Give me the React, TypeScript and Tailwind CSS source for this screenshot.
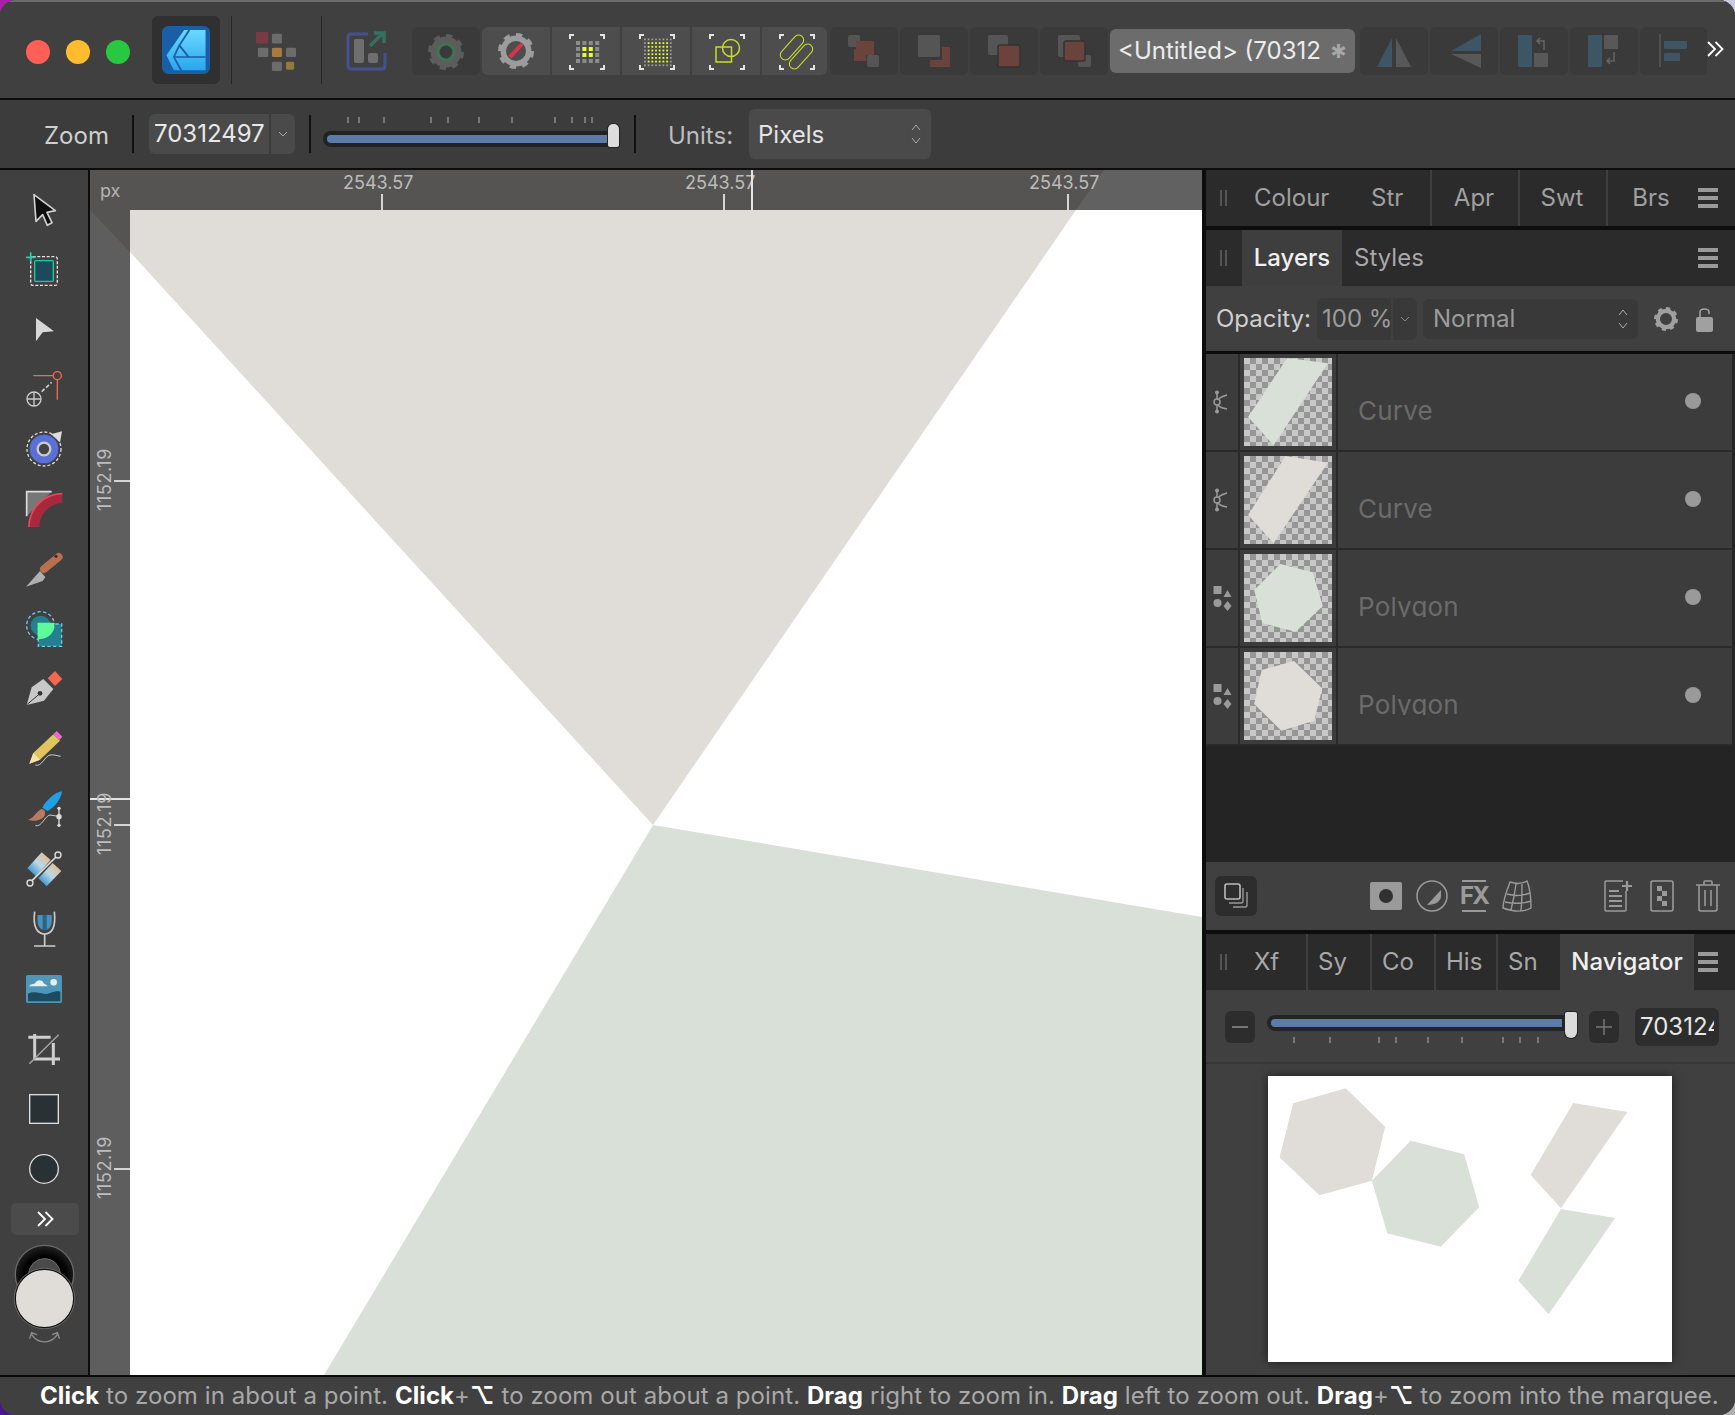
import type { ReactNode } from "react"

const BEIGE = "#e0ddd8"
const GREEN = "#d9e0d8"

function Gear({ cx, cy, r, color }: { cx: number; cy: number; r: number; color: string }) {
  return (
    <g fill="none" stroke={color}>
      <circle cx={cx} cy={cy} r={r * 0.68} strokeWidth={r * 0.36} />
      <circle cx={cx} cy={cy} r={r * 0.88} strokeWidth={r * 0.24} pathLength={16} strokeDasharray="1 1" />
    </g>
  )
}

function Brackets({ x1, x2 }: { x1: number; x2: number }) {
  const y1 = 8
  const y2 = 42
  return (
    <path
      d={`M${x1} ${y1 + 4}V${y1}H${x1 + 4}M${x2 - 4} ${y1}H${x2}V${y1 + 4}M${x1} ${y2 - 4}V${y2}H${x1 + 4}M${x2 - 4} ${y2}H${x2}V${y2 - 4}`}
      fill="none"
      stroke="#e4e4e4"
      strokeWidth="2"
    />
  )
}

function ToolBtn({ children, className }: { children: ReactNode; className: string }) {
  return (
    <div className={`h-[48px] shrink-0 ${className}`}>
      <svg viewBox="0 0 68 48" className="h-[48px] w-[68px]">
        {children}
      </svg>
    </div>
  )
}

function SnapDots() {
  const cells = [0, 1, 2, 3]
  return (
    <g>
      {cells.map((i) =>
        cells.map((j) => (
          <rect
            key={`${i}-${j}`}
            x={24 + i * 6.4}
            y={14 + j * 6}
            width="4"
            height="4"
            fill={i > 0 && i < 3 && j > 0 && j < 3 ? "#e6ff2e" : "#8c8c8c"}
          />
        )),
      )}
    </g>
  )
}

function SnapFine() {
  const cells = [0, 1, 2, 3, 4, 5, 6, 7]
  return (
    <g>
      {cells.map((i) =>
        cells.map((j) => (
          <rect
            key={`${i}-${j}`}
            x={22 + i * 3.7}
            y={11.5 + j * 3.7}
            width="1.8"
            height="1.8"
            fill={i > 0 && i < 7 && j > 0 && j < 7 ? "#e6ff2e" : "#9a9a9a"}
          />
        )),
      )}
    </g>
  )
}

function AppLogo() {
  return (
    <svg viewBox="438 72 130 144" preserveAspectRatio="none" className="h-[48px] w-[48px]">
      <defs>
        <linearGradient id="logoFill" x1="0" y1="0" x2="0" y2="1">
          <stop offset="0" stopColor="#6cd8ff" />
          <stop offset="1" stopColor="#29a6ee" />
        </linearGradient>
      </defs>
      <rect x="438" y="72" width="130" height="144" rx="18" fill="#1a5ea6" />
      <polygon points="498,84 556,84 556,205 470,205 450,160" fill="url(#logoFill)" />
      <path d="M512 84L485 130L510 165M470 165H556M470 165L490 205M470 165L485 130" fill="none" stroke="#1a5ea6" strokeWidth="5" />
    </svg>
  )
}

function PersonaGrid() {
  const gray = "#6c6c6c"
  return (
    <svg viewBox="692 85 108 118" preserveAspectRatio="none" className="h-[39px] w-[40px]">
      <rect x="692" y="85" width="33" height="35" rx="4" fill="#7a3a45" />
      <rect x="735" y="90" width="27" height="30" rx="4" fill={gray} />
      <rect x="697" y="133" width="28" height="28" rx="4" fill={gray} />
      <rect x="735" y="133" width="27" height="28" rx="4" fill="#a87a40" />
      <rect x="773" y="133" width="27" height="28" rx="4" fill={gray} />
      <rect x="735" y="175" width="27" height="28" rx="4" fill={gray} />
      <rect x="773" y="175" width="22" height="24" rx="4" fill="#8f7c3c" />
    </svg>
  )
}

function ExportIcon() {
  return (
    <svg viewBox="0 0 41 40" className="h-[40px] w-[41px]">
      <path d="M22 3H5Q2 3 2 6V35Q2 38 5 38H36Q39 38 39 35V22" fill="none" stroke="#45508f" strokeWidth="3" />
      <rect x="8" y="8" width="10" height="24" rx="2" fill="#6e6e6e" />
      <rect x="22" y="22" width="10" height="10" rx="2" fill="#6e6e6e" />
      <path d="M24 15L37 2M28 2H38V12" fill="none" stroke="#35705f" strokeWidth="3.5" />
    </svg>
  )
}

const tools: { box: string; art: ReactNode }[] = [
  {
    box: "75 60 114 114",
    art: <path d="M102 74L166 122L141 127L156 158L142 166L128 134L108 154Z" fill="#0e0e0e" stroke="#d0d0d0" strokeWidth="5" strokeLinejoin="round" />,
  },
  {
    box: "75 240 114 114",
    art: (
      <>
        <rect x="92" y="260" width="80" height="86" rx="6" fill="none" stroke="#e4e4e4" strokeWidth="4" strokeDasharray="9 5" />
        <rect x="104" y="272" width="56" height="62" rx="3" fill="#1c4a5a" stroke="#20c8a0" strokeWidth="4" />
        <path d="M78 262H107M92 247V276" stroke="#20d0a8" strokeWidth="5" />
      </>
    ),
  },
  { box: "75 423 114 114", art: <polygon points="108,447 162,487 128,490 108,517" fill="#d8d8d8" /> },
  {
    box: "75 603 114 114",
    art: (
      <>
        <path d="M100 620H160M172 632V692" stroke="#f5674f" strokeWidth="4" />
        <circle cx="172" cy="620" r="12" fill="none" stroke="#f5674f" strokeWidth="4" />
        <circle cx="102" cy="690" r="21" fill="none" stroke="#ccc" strokeWidth="4" />
        <path d="M81 690H123M102 669V711" stroke="#ccc" strokeWidth="4" />
        <path d="M125 668L155 640" stroke="#ccc" strokeWidth="5" strokeDasharray="12 6" />
      </>
    ),
  },
  {
    box: "75 783 114 114",
    art: (
      <>
        <circle cx="132" cy="840" r="51" fill="none" stroke="#ddd" strokeWidth="4" strokeDasharray="9 6" />
        <circle cx="132" cy="840" r="43" fill="#5a6fd8" />
        <circle cx="132" cy="840" r="19" fill="#444" stroke="#ccc" strokeWidth="7" />
        <polygon points="153,796 186,787 180,820" fill="#ddd" />
      </>
    ),
  },
  {
    box: "75 963 114 114",
    art: (
      <>
        <polygon points="80,968 155,968 80,1042" fill="#777" />
        <path d="M80 1042V968H155" fill="none" stroke="#ddd" strokeWidth="5" />
        <path d="M118 1074A70 72 0 0 1 187 1002V974A100 100 0 0 0 87 1074Z" fill="#a8283c" />
        <path d="M187 974A100 100 0 0 0 87 1074" fill="none" stroke="#f04458" strokeWidth="5" />
      </>
    ),
  },
  {
    box: "75 -27 114 114",
    art: (
      <>
        <path d="M132 30L176 -6" stroke="#b87050" strokeWidth="24" strokeLinecap="round" />
        <polygon points="78,83 120,36 136,54 128,66" fill="#b0b0b0" />
        <circle cx="168" cy="-8" r="5" fill="#4a2a20" />
      </>
    ),
  },
  {
    box: "75 153 114 114",
    art: (
      <>
        <circle cx="122" cy="200" r="42" fill="none" stroke="#6cc8f0" strokeWidth="4" strokeDasharray="10 7" />
        <circle cx="122" cy="200" r="30" fill="#24808f" />
        <rect x="115" y="195" width="70" height="67" fill="#24808f" stroke="#6cc8f0" strokeWidth="4" strokeDasharray="10 7" />
        <path d="M113 191H163V205C160 225 140 242 113 241Z" fill="#5cfc98" />
      </>
    ),
  },
  {
    box: "75 333 114 114",
    art: (
      <>
        <polygon points="80,438 95,385 130,360 160,390 132,425" fill="#c8c8c8" />
        <path d="M82 436L118 405" stroke="#333" strokeWidth="3" />
        <circle cx="120" cy="403" r="7" fill="#333" />
        <polygon points="143,358 165,336 187,360 165,381" fill="#f5674f" />
      </>
    ),
  },
  {
    box: "75 513 114 114",
    art: (
      <>
        <polygon points="88,614 100,582 160,526 180,545 120,602" fill="#e0c45c" />
        <polygon points="88,614 100,582 120,602" fill="#f2e4a8" />
        <polygon points="160,526 170,516 187,533 178,543" fill="#e86ad0" />
        <path d="M106 618C125 625 135 590 150 588C160 586 170 590 182 592" fill="none" stroke="#ccc" strokeWidth="3" />
      </>
    ),
  },
  {
    box: "75 693 114 114",
    art: (
      <>
        <path d="M127 746C140 722 165 700 186 697C184 718 165 745 143 756Z" fill="#20a0e8" />
        <path d="M84 782C100 780 108 758 124 750C134 750 138 760 134 770C125 785 100 788 84 782Z" fill="#b87a60" />
        <path d="M106 800C125 805 135 770 150 768C160 768 166 772 176 772" fill="none" stroke="#ccc" strokeWidth="3" />
        <path d="M177 747V800" stroke="#ddd" strokeWidth="4" />
        <circle cx="177" cy="748" r="5" fill="#ddd" />
        <circle cx="177" cy="773" r="8" fill="#ddd" />
        <circle cx="177" cy="799" r="5" fill="#ddd" />
      </>
    ),
  },
  {
    box: "75 873 114 114",
    art: (
      <>
        <defs>
          <linearGradient id="gradBand" x1="0" y1="1" x2="1" y2="0">
            <stop offset="0.15" stopColor="#3f98c8" />
            <stop offset="0.5" stopColor="#bcd8e8" />
            <stop offset="0.85" stopColor="#e2bd92" />
          </linearGradient>
        </defs>
        <polygon points="82,928 125,880 152,903 108,952" fill="url(#gradBand)" />
        <polygon points="115,958 158,912 184,936 140,982" fill="url(#gradBand)" />
        <path d="M96 965L168 894" stroke="#ddd" strokeWidth="5" />
        <circle cx="90" cy="972" r="9" fill="#444" stroke="#ddd" strokeWidth="4" />
        <circle cx="174" cy="888" r="9" fill="#444" stroke="#ddd" strokeWidth="4" />
      </>
    ),
  },
  {
    box: "75 1053 114 114",
    art: (
      <>
        <path d="M113 1068H155C158 1095 152 1112 134 1114C116 1112 110 1095 113 1068Z" fill="#4a90b8" />
        <path d="M134 1068V1114" stroke="#2c6488" strokeWidth="12" />
        <path d="M104 1058C98 1105 112 1125 134 1125C156 1125 168 1105 163 1058" fill="none" stroke="#ccc" strokeWidth="5" />
        <path d="M134 1125V1160M102 1161H166" stroke="#ccc" strokeWidth="5" />
      </>
    ),
  },
  {
    box: "75 3 114 114",
    art: (
      <>
        <rect x="78" y="18" width="108" height="84" rx="5" fill="#4f97b8" />
        <path d="M88 52C90 44 102 46 106 42C112 30 128 32 132 44C138 46 142 50 142 52Z" fill="#e8f0f4" />
        <circle cx="161" cy="40" r="10" fill="#e8f0f4" />
        <path d="M84 74C110 62 130 82 150 72C165 66 175 66 181 68V97H84Z" fill="#1c4a5e" />
      </>
    ),
  },
  {
    box: "75 183 114 114",
    art: (
      <>
        <path d="M85 205H152M104 195V270H180M160 222V288" fill="none" stroke="#cfcfcf" strokeWidth="9" />
        <path d="M88 284L176 197" stroke="#a8a8a8" strokeWidth="4" />
      </>
    ),
  },
  { box: "75 363 114 114", art: <rect x="89" y="377" width="86" height="86" fill="#2a3135" stroke="#ddd" strokeWidth="4" /> },
  { box: "75 543 114 114", art: <circle cx="132" cy="600" r="43" fill="#2a3135" stroke="#ddd" strokeWidth="4" /> },
]

function LeftTools() {
  return (
    <div className="flex w-[88px] shrink-0 flex-col items-center bg-[#404040] pt-[9px]">
      {tools.map((t, i) => (
        <div key={i} className="flex h-[60px] w-full items-center justify-center">
          <svg viewBox={t.box} className="h-[38px] w-[38px] overflow-visible">
            {t.art}
          </svg>
        </div>
      ))}
      <div className="ml-[2px] mt-[4px] flex h-[32px] w-[68px] items-center justify-center rounded-[5px] bg-[#4b4b4b]">
        <Chevrons />
      </div>
      <svg viewBox="35 820 200 310" className="mt-[8px] h-[103px] w-[67px]">
        <defs>
          <radialGradient id="strokeSwatch" cx="0.5" cy="0.55" r="0.6">
            <stop offset="0.6" stopColor="#000" />
            <stop offset="1" stopColor="#2c2c2c" />
          </radialGradient>
        </defs>
        <circle cx="135" cy="915" r="88" fill="url(#strokeSwatch)" stroke="#6a6a6a" strokeWidth="4" />
        <circle cx="135" cy="915" r="48" fill="#4a4a4a" stroke="#6a6a6a" strokeWidth="3" />
        <circle cx="135" cy="987" r="88" fill={BEIGE} stroke="#111" strokeWidth="4" />
        <circle cx="135" cy="987" r="91" fill="none" stroke="#666" strokeWidth="3" />
        <path d="M96 1095C115 1125 155 1125 174 1095M90 1108L96 1090L112 1096M180 1108L174 1090L158 1096" fill="none" stroke="#8c8c8c" strokeWidth="4" />
      </svg>
    </div>
  )
}

function Chevrons() {
  return (
    <svg viewBox="0 0 17 16" className="h-[16px] w-[17px]">
      <path d="M1 1L8 8L1 15M8.5 1L15.5 8L8.5 15" fill="none" stroke="#fff" strokeWidth="1.8" />
    </svg>
  )
}

function TopBar() {
  return (
    <div className="flex h-[98px] shrink-0 items-center border-t-2 border-[#6b6b6b] bg-[#404040] pl-[26px]">
      <div className="mt-[4px] flex gap-4">
        <div className="h-[24px] w-[24px] rounded-full bg-[#ff5f57]" />
        <div className="h-[24px] w-[24px] rounded-full bg-[#febc2e]" />
        <div className="h-[24px] w-[24px] rounded-full bg-[#28c840]" />
      </div>
      <div className="ml-[22px] flex h-[68px] w-[68px] items-center justify-center rounded-[6px] bg-[#303030]">
        <AppLogo />
      </div>
      <div className="ml-[11px] h-[68px] w-[1px] bg-[#262626]" />
      <div className="ml-[24px] mt-[2px]">
        <PersonaGrid />
      </div>
      <div className="ml-[25px] h-[68px] w-[1px] bg-[#262626]" />
      <div className="ml-[24px] mt-[2px]">
        <ExportIcon />
      </div>
      <div className="ml-[25px] mt-[2px] flex items-center gap-[2px]">
        <ToolBtn className="w-[68px] rounded-[6px] bg-[#3a3a3a]">
          <Gear cx={34} cy={25} r={18} color="#5c5c5c" />
          <circle cx="34" cy="25" r="8" fill="#3a3a3a" stroke="#3f7455" strokeWidth="3" />
        </ToolBtn>
        <ToolBtn className="w-[68px] rounded-l-[6px] bg-[#4d4d4d]">
          <Gear cx={34} cy={24} r={18} color="#9c9c9c" />
          <circle cx="34" cy="24" r="10" fill="#4d4d4d" />
          <path d="M28 30L40 17" stroke="#e0304a" strokeWidth="4" />
        </ToolBtn>
        <ToolBtn className="w-[68px] bg-[#4d4d4d]">
          <Brackets x1={18} x2={52} />
          <SnapDots />
        </ToolBtn>
        <ToolBtn className="w-[68px] bg-[#4d4d4d]">
          <Brackets x1={18} x2={52} />
          <SnapFine />
        </ToolBtn>
        <ToolBtn className="w-[68px] bg-[#4d4d4d]">
          <Brackets x1={18} x2={52} />
          <rect x="24" y="20" width="15.5" height="15" fill="none" stroke="#c8dc28" strokeWidth="1.5" />
          <circle cx="39" cy="21" r="8.5" fill="none" stroke="#c8dc28" strokeWidth="1.5" />
        </ToolBtn>
        <ToolBtn className="w-[65px] overflow-hidden rounded-r-[6px] bg-[#4d4d4d]">
          <Brackets x1={18} x2={52} />
          <g fill="none" stroke="#c8dc28" strokeWidth="1.1">
            <rect x="15" y="15.5" width="30" height="10" rx="5" transform="rotate(-48 30 20.5)" />
            <rect x="24" y="24.5" width="30" height="10" rx="5" transform="rotate(-48 39 29.5)" />
          </g>
        </ToolBtn>
        <div className="ml-[1px] flex gap-[2px]">
          <ToolBtn className="w-[68px] rounded-[6px] bg-[#3a3a3a]">
            <rect x="18" y="8" width="12" height="12" rx="2" fill="#555" />
            <path d="M26 14H44V28H36V34H24V22H26Z" fill="#6a433c" />
            <rect x="37" y="28" width="12" height="12" rx="2" fill="#555" />
          </ToolBtn>
          <ToolBtn className="w-[68px] rounded-[6px] bg-[#3a3a3a]">
            <rect x="18" y="8" width="22" height="22" rx="2" fill="#555" />
            <path d="M42 20H50V40H30V33H42Z" fill="#6a433c" />
          </ToolBtn>
          <ToolBtn className="w-[68px] rounded-[6px] bg-[#3a3a3a]">
            <rect x="18" y="8" width="20" height="20" rx="2" fill="#555" />
            <rect x="28" y="18" width="22" height="22" rx="2" fill="#6a433c" stroke="#333" strokeWidth="1.5" />
          </ToolBtn>
          <ToolBtn className="w-[68px] rounded-[6px] bg-[#3a3a3a]">
            <rect x="18" y="8" width="22" height="22" rx="2" fill="#555" />
            <rect x="38" y="28" width="13" height="12" rx="2" fill="#555" />
            <rect x="24" y="14" width="21" height="20" rx="2" fill="#6a433c" stroke="#333" strokeWidth="1.5" />
          </ToolBtn>
        </div>
      </div>
      <div className="ml-[2px] mt-[2px] flex h-[44px] w-[245px] shrink-0 items-center whitespace-nowrap rounded-[6px] bg-[#6c6c6c] pl-[8px] text-[24px] text-[#ececec]">
        &lt;Untitled&gt; (70312
        <span className="relative top-[6px] ml-[8px] text-[34px] font-bold leading-none text-[#a8a8a8]">*</span>
      </div>
      <div className="ml-[5px] mt-[2px] flex gap-[2px]">
        <ToolBtn className="w-[68px] rounded-[6px] bg-[#3a3a3a]">
          <path d="M17 40L32 11V40Z" fill="#3d5564" />
          <path d="M36 11L51 40H36Z" fill="#585858" />
        </ToolBtn>
        <ToolBtn className="w-[68px] rounded-[6px] bg-[#3a3a3a]">
          <path d="M51 7V24H21Z" fill="#3d5564" />
          <path d="M21 27H51V41Z" fill="#585858" />
        </ToolBtn>
        <ToolBtn className="w-[68px] rounded-[6px] bg-[#3a3a3a]">
          <rect x="18" y="8" width="14" height="32" rx="1" fill="#3d5564" />
          <rect x="34" y="26" width="14" height="14" rx="1" fill="#585858" />
          <path d="M44 23V14H37M40 11L37 14L40 17" fill="none" stroke="#666" strokeWidth="1.5" />
        </ToolBtn>
        <ToolBtn className="w-[68px] rounded-[6px] bg-[#3a3a3a]">
          <rect x="18" y="8" width="14" height="32" rx="1" fill="#3d5564" />
          <rect x="34" y="8" width="14" height="14" rx="1" fill="#585858" />
          <path d="M44 25V34H37M40 31L37 34L40 37" fill="none" stroke="#666" strokeWidth="1.5" />
        </ToolBtn>
        <ToolBtn className="w-[67px] overflow-hidden rounded-[6px] bg-[#3a3a3a]">
          <path d="M20 7V40" stroke="#585858" strokeWidth="1.5" />
          <rect x="24" y="14" width="23" height="8" rx="1" fill="#3d5564" />
          <rect x="24" y="26" width="16" height="8" rx="1" fill="#3d5564" />
        </ToolBtn>
      </div>
      <div className="mt-[-2px]">
        <Chevrons />
      </div>
    </div>
  )
}

function ContextBar() {
  const ticks = ["ml-[24px]", "ml-[9px]", "ml-[23px]", "ml-[45px]", "ml-[15px]", "ml-[29px]", "ml-[31px]", "ml-[41px]", "ml-[15px]", "ml-[11px]", "ml-[5px]"]
  return (
    <div className="flex h-[68px] shrink-0 items-center bg-[#3c3c3c]">
      <div className="ml-[44px] mt-[3px] w-[63px] whitespace-nowrap text-[24px] text-[#cfcfcf]">Zoom</div>
      <div className="ml-[25px] h-[38px] w-[2px] bg-[#111]" />
      <div className="ml-[15px] flex h-[40px] w-[146px] items-center overflow-hidden rounded-[6px] bg-[#4a4a4a] text-[24px] text-[#e8e8e8]">
        <div className="w-[120px] pl-[5px]">70312497</div>
        <div className="h-full w-[2px] bg-[#3c3c3c]" />
        <svg viewBox="0 0 10 6" className="ml-[7px] h-[6px] w-[10px]">
          <path d="M1 1L5 5L9 1" fill="none" stroke="#aaa" strokeWidth="1" />
        </svg>
      </div>
      <div className="ml-[14px] h-[38px] w-[2px] bg-[#111]" />
      <div className="mb-[4px] ml-[12px] flex w-[297px] flex-col">
        <div className="flex h-[6px]">
          {ticks.map((c, i) => (
            <div key={i} className={`h-[6px] w-[2px] shrink-0 bg-[#777] ${c}`} />
          ))}
        </div>
        <div className="relative mt-[8px] h-[16px] rounded-full bg-[#222] p-[4px]">
          <div className="h-[8px] rounded-l-full bg-[#5b7ca8]" />
          <div className="absolute right-[1px] top-[-7px] h-[23px] w-[11px] rounded-[2px] rounded-t-[5px] bg-[#dcdcdc] ring-1 ring-[#222]" />
        </div>
      </div>
      <div className="ml-[14px] h-[38px] w-[2px] bg-[#111]" />
      <div className="ml-[32px] mt-[3px] w-[65px] whitespace-nowrap text-[24px] text-[#bdbdbd]">Units:</div>
      <div className="ml-[16px] flex h-[50px] w-[182px] items-center justify-between rounded-[6px] bg-[#4a4a4a] pl-[9px] pr-[10px] text-[24px] text-[#e4e4e4]">
        <span className="mt-[2px]">Pixels</span>
        <UpDown />
      </div>
    </div>
  )
}

function UpDown() {
  return (
    <svg viewBox="0 0 10 22" className="h-[22px] w-[10px]">
      <path d="M1 7L5 2L9 7M1 15L5 20L9 15" fill="none" stroke="#aaa" strokeWidth="1" />
    </svg>
  )
}

function Rulers() {
  const vertical = "absolute left-[1px] rotate-180 tracking-[0.6px] [writing-mode:vertical-rl]"
  return (
    <div className="flex min-w-0 flex-1 flex-col">
      <div className="relative h-[40px] shrink-0 bg-[#555452] text-[18px] text-[#bcbcbc]">
        <svg viewBox="0 0 1112 40" className="absolute inset-0 h-full w-full">
          <polygon points="1014,0 1112,0 1112,40 986,40" fill="#616161" />
        </svg>
        <span className="absolute left-[10px] top-[7px] text-[#b4b4b4]">px</span>
        <span className="absolute left-[253px] top-[-1px]">2543.57</span>
        <div className="absolute bottom-0 left-[291px] h-[16px] w-[2px] bg-[#d4d4d4]" />
        <span className="absolute left-[595px] top-[-1px]">2543.57</span>
        <div className="absolute bottom-0 left-[633px] h-[16px] w-[2px] bg-[#d4d4d4]" />
        <div className="absolute bottom-0 left-[661px] h-[40px] w-[2px] bg-[#e4e4e4]" />
        <span className="absolute left-[939px] top-[-1px]">2543.57</span>
        <div className="absolute bottom-0 left-[977px] h-[16px] w-[2px] bg-[#d4d4d4]" />
      </div>
      <div className="flex min-h-0 flex-1">
        <div className="relative w-[40px] shrink-0 bg-[#5e5e5e] text-[18px] text-[#bcbcbc]">
          <svg viewBox="0 0 40 42" className="absolute left-0 top-0 h-[42px] w-[40px]">
            <polygon points="0,0 40,0 40,42" fill="#555452" />
          </svg>
          <span className={`${vertical} top-[238px]`}>1152.19</span>
          <div className="absolute left-[24px] top-[270px] h-[2px] w-[16px] bg-[#d4d4d4]" />
          <div className="absolute left-0 top-[588px] h-[2px] w-[40px] bg-[#e4e4e4]" />
          <span className={`${vertical} top-[582px]`}>1152.19</span>
          <div className="absolute left-[24px] top-[614px] h-[2px] w-[16px] bg-[#d4d4d4]" />
          <span className={`${vertical} top-[926px]`}>1152.19</span>
          <div className="absolute left-[24px] top-[958px] h-[2px] w-[16px] bg-[#d4d4d4]" />
        </div>
        <div className="min-w-0 flex-1 bg-white">
          <svg viewBox="130 210 1072 1165" preserveAspectRatio="none" className="block h-full w-full">
            <polygon points="130,210 1076,210 653,825 130,252" fill={BEIGE} />
            <polygon points="653,825 1202,917 1202,1375 324,1375" fill={GREEN} />
          </svg>
        </div>
      </div>
    </div>
  )
}

function Grip() {
  return (
    <div className="flex h-[16px] gap-[3px]">
      <div className="h-full w-[2px] bg-[#555]" />
      <div className="h-full w-[2px] bg-[#555]" />
    </div>
  )
}

function Menu() {
  return (
    <div className="flex w-[20px] flex-col gap-[4px]">
      <div className="h-[4px] bg-[#9a9a9a]" />
      <div className="h-[4px] bg-[#9a9a9a]" />
      <div className="h-[4px] bg-[#9a9a9a]" />
    </div>
  )
}

function TabSep() {
  return <div className="h-full w-[2px] bg-[#3e3e3e]" />
}

function CurveIcon() {
  return (
    <svg viewBox="0 0 15 24" className="h-[24px] w-[15px]">
      <path d="M4 2V22" stroke="#9a9a9a" strokeWidth="1.5" />
      <path d="M14 5C7 7 4 10 4 12C4 15 7 18 14 19" fill="none" stroke="#9a9a9a" strokeWidth="1.5" />
      <circle cx="4" cy="2.5" r="2" fill="#9a9a9a" />
      <circle cx="4" cy="12" r="3" fill="#3c3c3c" stroke="#9a9a9a" strokeWidth="1.5" />
      <circle cx="4" cy="21.5" r="2" fill="#9a9a9a" />
    </svg>
  )
}

function ShapesIcon() {
  return (
    <svg viewBox="0 0 19 25" className="h-[25px] w-[19px]">
      <rect x="0.5" y="0" width="8" height="8" fill="#9a9a9a" />
      <polygon points="14.5,4 18.5,11 10.5,11" fill="#9a9a9a" />
      <circle cx="4.5" cy="17" r="4" fill="#9a9a9a" />
      <polygon points="14.5,15 18.5,20 14.5,25 10.5,20" fill="#9a9a9a" />
    </svg>
  )
}

const layers = [
  { name: "Curve", icon: <CurveIcon />, fill: GREEN, points: "255,18 375,34 215,280 140,195" },
  { name: "Curve", icon: <CurveIcon />, fill: BEIGE, points: "250,18 375,38 215,280 140,195" },
  { name: "Polygon", icon: <ShapesIcon />, fill: GREEN, points: "235,48 330,73 360,174 280,251 182,226 158,126" },
  { name: "Polygon", icon: <ShapesIcon />, fill: BEIGE, points: "275,45 358,127 335,224 238,254 158,174 180,72" },
]

function LayerRow({ layer }: { layer: (typeof layers)[number] }) {
  return (
    <div className="flex h-[98px] shrink-0 border-b-2 border-[#2a2a2a] bg-[#3c3c3c]">
      <div className="flex w-[32px] shrink-0 items-center pl-[7px]">{layer.icon}</div>
      <div className="w-[2px] bg-[#2a2a2a]" />
      <div className="flex w-[96px] shrink-0 items-start justify-center pt-[4px]">
        <div className="h-[88px] w-[88px] bg-[repeating-conic-gradient(#969696_0_25%,#c8c8c8_0_50%)] bg-[length:12px_12px]">
          <svg viewBox="128 18 259 264" preserveAspectRatio="none" className="h-full w-full">
            <polygon points={layer.points} fill={layer.fill} />
          </svg>
        </div>
      </div>
      <div className="w-[2px] bg-[#2a2a2a]" />
      <div className="flex flex-1 items-start justify-between pl-[20px] pr-[31px]">
        <div className="mt-[41px] h-[26px] overflow-hidden text-[26px] leading-[32px] tracking-[0.2px] text-[#6b6b6b]">{layer.name}</div>
        <div className="mt-[39px] h-[16px] w-[16px] rounded-full bg-[#9a9a9a]" />
      </div>
    </div>
  )
}

function LayersFooter() {
  const c = "#9a9a9a"
  return (
    <div className="flex h-[68px] shrink-0 items-center bg-[#404040] pl-[9px]">
      <div className="flex h-[40px] w-[42px] items-center justify-center rounded-[6px] bg-[#2d2d2d]">
        <svg viewBox="0 0 24 26" className="h-[26px] w-[24px]">
          <rect x="1" y="1" width="15" height="15" rx="2" fill="none" stroke="#bbb" strokeWidth="1.6" />
          <path d="M19 5V18Q19 20 17 20H5M23 9V22Q23 24 21 24H9" fill="none" stroke="#999" strokeWidth="1.4" />
        </svg>
      </div>
      <svg viewBox="0 0 32 28" className="ml-[113px] h-[28px] w-[32px]">
        <rect width="32" height="28" rx="2" fill={c} />
        <circle cx="16" cy="14" r="7" fill="#303030" />
      </svg>
      <svg viewBox="0 0 32 32" className="ml-[14px] h-[32px] w-[32px]">
        <circle cx="16" cy="16" r="15" fill="none" stroke={c} strokeWidth="1.5" />
        <path d="M25 10V16C25 21 20 25 11 25Z" fill={c} />
      </svg>
      <div className="ml-[14px] flex h-[32px] w-[24px] items-center justify-center border-y-2 border-[#9a9a9a] text-[24px] font-bold leading-none tracking-[-2px] text-[#9a9a9a]">
        FX
      </div>
      <svg viewBox="0 0 30 32" className="ml-[16px] h-[32px] w-[30px]">
        <path
          d="M8 2C14 4 20 4 25 1C28 8 29 18 29 28C22 32 12 32 1 28C1 20 5 10 8 2ZM5 14C12 16 20 16 28 13M3 22C12 24 20 24 29 21M14 4C13 12 11 22 9 30M20 4C20 12 20 22 19 31"
          fill="none"
          stroke={c}
          strokeWidth="1.4"
        />
      </svg>
      <svg viewBox="0 0 28 32" className="ml-[72px] h-[32px] w-[28px]">
        <path d="M19 1H2Q1 1 1 2V30Q1 31 2 31H21Q22 31 22 30V11" fill="none" stroke={c} strokeWidth="1.5" />
        <path d="M5 11H15M5 16H18M5 21H18M5 26H18M23 1V11M18 6H28" stroke={c} strokeWidth="2.2" />
      </svg>
      <svg viewBox="0 0 24 32" className="ml-[18px] h-[32px] w-[24px]">
        <rect x="1" y="1" width="22" height="30" rx="2" fill="none" stroke={c} strokeWidth="1.6" />
        <path d="M7 6H12V11H7ZM12 11H17V16H12ZM7 16H12V21H7ZM12 21H17V26H12Z" fill={c} />
      </svg>
      <svg viewBox="0 0 24 32" className="ml-[22px] h-[32px] w-[24px]">
        <path d="M0 5H24M8 5V2Q8 1 9 1H15Q16 1 16 2V5M3 5V29Q3 31 5 31H19Q21 31 21 29V5M9 10V26M15 10V26" fill="none" stroke={c} strokeWidth="1.6" />
      </svg>
    </div>
  )
}

function Navigator() {
  const ticks = ["ml-[26px]", "ml-[34px]", "ml-[47px]", "ml-[15px]", "ml-[30px]", "ml-[32px]", "ml-[39px]", "ml-[15px]", "ml-[16px]"]
  return (
    <div className="flex min-h-0 flex-1 flex-col">
      <div className="flex h-[56px] shrink-0 items-center bg-[#2b2b2b] text-[24px] text-[#a8a8a8]">
        <div className="flex w-[48px] shrink-0 pl-[14px]">
          <Grip />
        </div>
        <div className="w-[52px]">Xf</div>
        <TabSep />
        <div className="w-[62px] pl-[10px]">Sy</div>
        <TabSep />
        <div className="w-[62px] pl-[10px]">Co</div>
        <TabSep />
        <div className="w-[60px] pl-[10px]">His</div>
        <TabSep />
        <div className="w-[62px] pl-[10px]">Sn</div>
        <div className="flex h-full w-[134px] items-center justify-center bg-[#404040] font-medium text-[#f0f0f0]">Navigator</div>
        <div className="ml-[4px]">
          <Menu />
        </div>
      </div>
      <div className="flex h-[74px] shrink-0 items-center border-b-2 border-[#363636] bg-[#404040] pl-[19px] pt-[2px]">
        <div className="flex h-[32px] w-[30px] items-center justify-center rounded-[6px] bg-[#2d2d2d]">
          <div className="h-[2px] w-[16px] bg-[#777]" />
        </div>
        <div className="ml-[12px] flex w-[311px] flex-col">
          <div className="relative mt-[3px] h-[16px] rounded-full bg-[#242424] p-[4px]">
            <div className="mr-[12px] h-[8px] rounded-l-full bg-[#5b7ca8]" />
            <div className="absolute right-[1px] top-[-3px] h-[26px] w-[12px] rounded-[2px] rounded-b-[6px] bg-[#dcdcdc] ring-1 ring-[#242424]" />
          </div>
          <div className="mt-[6px] flex h-[6px]">
            {ticks.map((c, i) => (
              <div key={i} className={`h-[6px] w-[2px] shrink-0 bg-[#777] ${c}`} />
            ))}
          </div>
        </div>
        <div className="ml-[11px] flex h-[32px] w-[30px] items-center justify-center rounded-[6px] bg-[#2d2d2d]">
          <svg viewBox="0 0 16 16" className="h-[16px] w-[16px]">
            <path d="M8 0V16M0 8H16" stroke="#777" strokeWidth="1.5" />
          </svg>
        </div>
        <div className="ml-[16px] h-[38px] w-[84px] overflow-hidden whitespace-nowrap rounded-[6px] bg-[#2d2d2d] pl-[5px] pr-[5px] text-[24px] leading-[38px] text-[#e8e8e8]">
          <div className="h-full overflow-hidden">70312497</div>
        </div>
      </div>
      <div className="flex min-h-0 flex-1 justify-center bg-[#404040] pr-[1px] pt-[12px]">
        <svg
          viewBox="198 48 1186 858"
          preserveAspectRatio="none"
          className="h-[286px] w-[404px] bg-white shadow-[0_0_10px_rgba(0,0,0,0.55)]"
        >
          <polygon points="272,130 426,85 542,200 503,362 349,406 232,292" fill={BEIGE} />
          <polygon points="617,242 774,283 818,442 705,560 548,520 503,362" fill={GREEN} />
          <polygon points="1094,129 1253,156 1058,445 969,345" fill={BEIGE} />
          <polygon points="1058,447 1217,474 1022,763 933,662" fill={GREEN} />
        </svg>
      </div>
    </div>
  )
}

function RightPanel() {
  return (
    <div className="flex w-[529px] shrink-0 flex-col bg-[#0d0d0d]">
      <div className="flex h-[56px] shrink-0 items-center bg-[#2b2b2b] text-[24px] text-[#a0a0a0]">
        <div className="flex w-[48px] shrink-0 pl-[14px]">
          <Grip />
        </div>
        <div className="w-[117px]">Colour</div>
        <div className="w-[59px]">Str</div>
        <TabSep />
        <div className="w-[84px] text-center">Apr</div>
        <div className="w-[2px] self-stretch" />
        <TabSep />
        <div className="w-[84px] text-center">Swt</div>
        <div className="w-[2px] self-stretch" />
        <TabSep />
        <div className="w-[86px] text-center">Brs</div>
        <div className="ml-[4px]">
          <Menu />
        </div>
      </div>
      <div className="mt-[4px] flex h-[56px] shrink-0 items-center bg-[#2b2b2b] text-[24px] text-[#a8a8a8]">
        <div className="flex w-[36px] shrink-0 pl-[14px]">
          <Grip />
        </div>
        <div className="flex h-full w-[100px] items-center justify-center bg-[#3e3e3e] font-medium text-[#f0f0f0]">Layers</div>
        <div className="ml-[12px] flex-1">Styles</div>
        <div className="mr-[17px]">
          <Menu />
        </div>
      </div>
      <div className="flex h-[65px] shrink-0 items-center bg-[#404040] text-[24px]">
        <div className="ml-[10px] text-[#cfcfcf]">Opacity:</div>
        <div className="ml-[6px] flex h-[42px] w-[100px] items-center rounded-[6px] bg-[#393939] text-[#9c9c9c]">
          <div className="w-[74px] overflow-hidden whitespace-nowrap pl-[5px]">100 %</div>
          <div className="h-full w-[2px] bg-[#404040]" />
          <svg viewBox="0 0 10 6" className="ml-[7px] h-[6px] w-[10px]">
            <path d="M1 1L5 5L9 1" fill="none" stroke="#888" strokeWidth="1" />
          </svg>
        </div>
        <div className="ml-[6px] flex h-[40px] w-[215px] items-center justify-between rounded-[6px] bg-[#393939] pl-[10px] pr-[10px] text-[#9c9c9c]">
          Normal
          <UpDown />
        </div>
        <svg viewBox="0 0 24 24" className="ml-[16px] h-[24px] w-[24px]">
          <Gear cx={12} cy={12} r={12} color="#a0a0a0" />
        </svg>
        <svg viewBox="0 0 17 26" className="ml-[18px] h-[26px] w-[17px]">
          <path d="M4 12V6C4 2 13 2 13 6V8" fill="none" stroke="#a0a0a0" strokeWidth="1.6" />
          <rect x="0" y="11" width="17" height="15" rx="2" fill="#a0a0a0" />
        </svg>
      </div>
      <div className="h-[3px] shrink-0" />
      <div className="flex h-[508px] shrink-0 flex-col bg-[#242424] pr-[3px]">
        {layers.map((l, i) => (
          <LayerRow key={i} layer={l} />
        ))}
      </div>
      <LayersFooter />
      <div className="h-[4px] shrink-0" />
      <Navigator />
    </div>
  )
}

function StatusBar() {
  const b = "font-bold text-white"
  return (
    <div className="flex h-[40px] shrink-0 items-center whitespace-nowrap border-t-2 border-[#0d0d0d] bg-[#404040] pl-[40px] text-[24px] tracking-[0.07px] text-[#a8a8a8]">
      <span className={b}>Click</span>
      &nbsp;to zoom in about a point.&nbsp;
      <span className={b}>Click</span>+<span className={b}>⌥</span>
      &nbsp;to zoom out about a point.&nbsp;
      <span className={b}>Drag</span>
      &nbsp;right to zoom in.&nbsp;
      <span className={b}>Drag</span>
      &nbsp;left to zoom out.&nbsp;
      <span className={b}>Drag</span>+<span className={b}>⌥</span>
      &nbsp;to zoom into the marquee.
    </div>
  )
}

export default function App() {
  return (
    <div className="h-[1415px] w-[1735px] overflow-hidden bg-[conic-gradient(#c9c9e0_0_25%,#b0b0b0_25%_50%,#4b1590_50%_75%,#a81fa8_75%)] font-['Inter','DejaVu_Sans',sans-serif]">
      <div className="flex h-full flex-col overflow-hidden rounded-[16px] bg-[#404040]">
        <TopBar />
        <div className="h-[2px] shrink-0 bg-[#0d0d0d]" />
        <ContextBar />
        <div className="h-[2px] shrink-0 bg-[#0d0d0d]" />
        <div className="flex min-h-0 flex-1">
          <LeftTools />
          <div className="w-[2px] shrink-0 bg-[#0d0d0d]" />
          <Rulers />
          <div className="w-[4px] shrink-0 bg-[#0d0d0d]" />
          <RightPanel />
        </div>
        <StatusBar />
      </div>
    </div>
  )
}
